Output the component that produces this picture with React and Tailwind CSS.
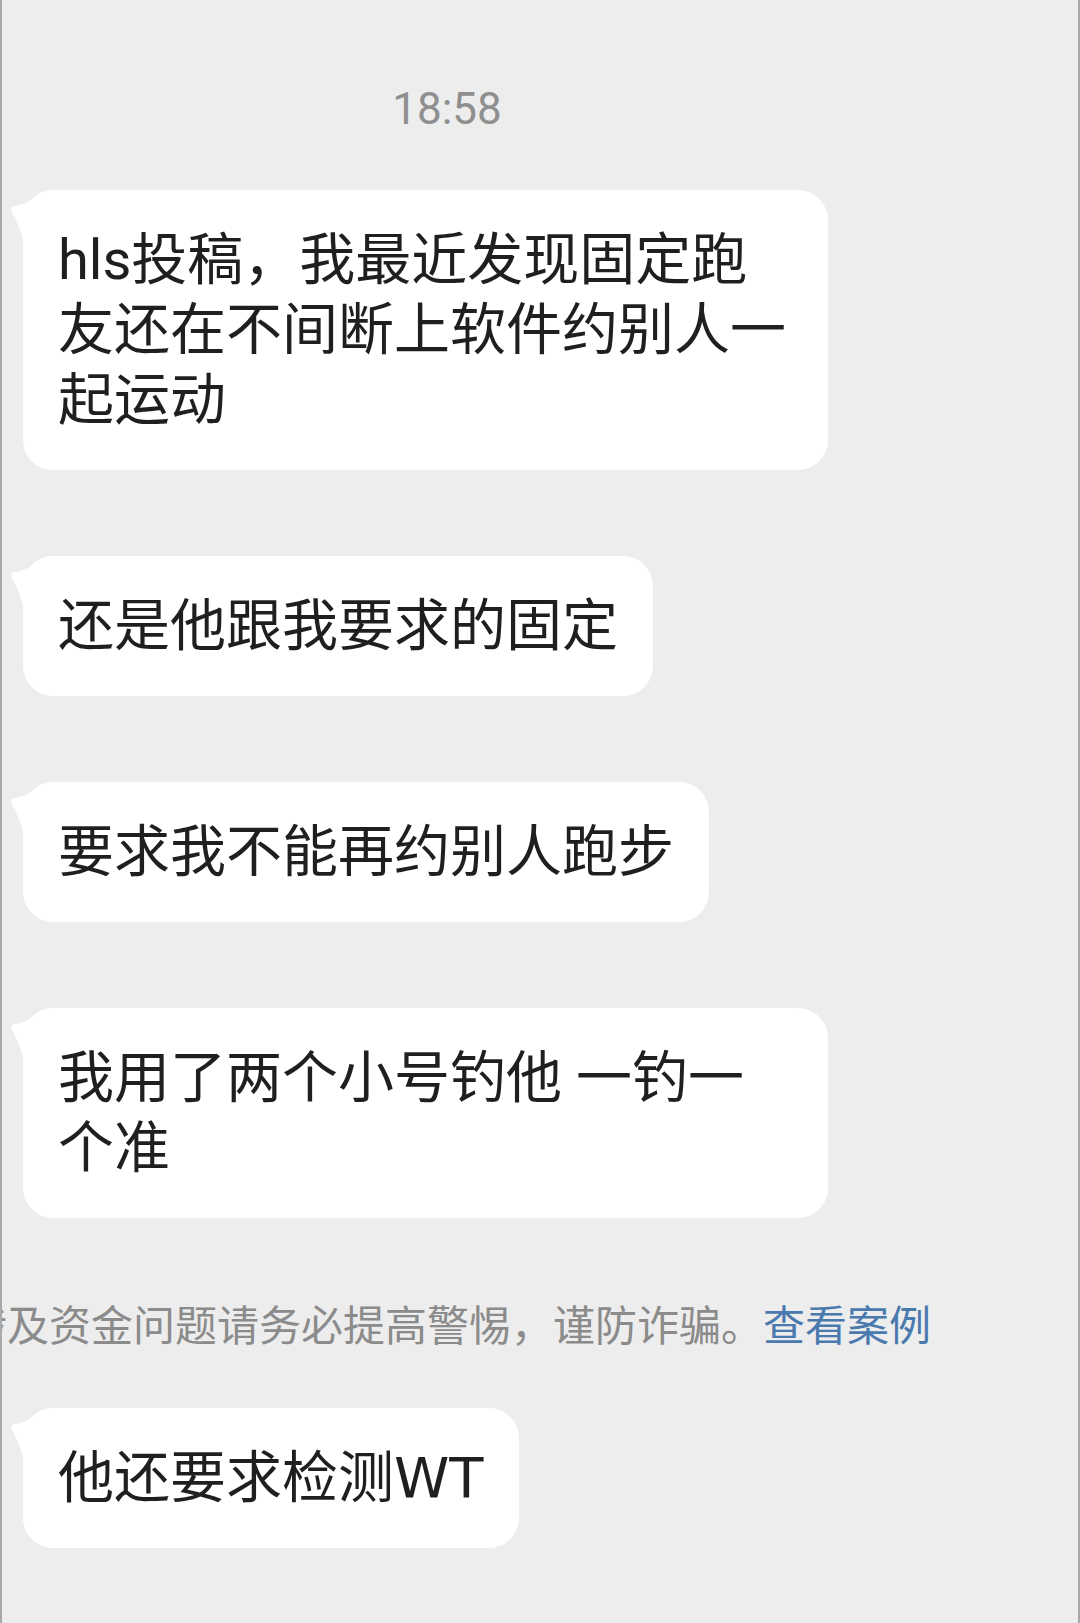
import React from 'react';

const cjk = { fontFamily: 'Roboto, "Noto Sans CJK SC", sans-serif' };

function Tail() {
  // little tail that sticks out on the left near the top of every bubble
  return (
    <svg className="absolute left-[-13px] top-0 w-[40px] h-[60px]" viewBox="0 0 40 60">
      <path d="M13 60 L13 48 Q8 33 2 22 Q-1 16 6 16 Q16 14 24 8 Q31 1 40 0 L40 60 Z" fill="#ffffff" />
    </svg>
  );
}

function Bubble({ children, className = '' }) {
  return (
    <div
      className={`relative w-fit max-w-[805px] ml-[21px] bg-white rounded-[30px] px-[35px] py-[35px] text-[56px] leading-[70px] text-[#1f1f1f] ${className}`}
      style={cjk}
    >
      <Tail />
      <span className="relative">{children}</span>
    </div>
  );
}

export default function App() {
  return (
    <div className="w-[1080px] min-h-[1623px] bg-[#ededed] border-x-2 border-[#a8a8a8] overflow-hidden flex flex-col pt-[79px]">
      <div className="flex justify-center pr-[186px]">
        <span className="text-[44px] leading-[60px] text-[#8f8f8f]" style={cjk}>18:58</span>
      </div>

      <Bubble className="mt-[51px]">hls投稿，我最近发现固定跑友还在不间断上软件约别人一起运动</Bubble>
      <Bubble className="mt-[86px]">还是他跟我要求的固定</Bubble>
      <Bubble className="mt-[86px]">要求我不能再约别人跑步</Bubble>
      <Bubble className="mt-[86px]">我用了两个小号钓他 一钓一个准</Bubble>

      <div className="flex justify-center pr-[184px] mt-[79px]">
        <p className="whitespace-nowrap text-[42px] leading-[60px] text-[#8b8b8b]" style={cjk}>
          涉及资金问题请务必提高警惕，谨防诈骗。<span className="text-[#4a79ae]">查看案例</span>
        </p>
      </div>

      <Bubble className="mt-[51px]">
        他还要求检测<span style={{ fontFamily: '"DejaVu Sans", sans-serif' }}>WT</span>
      </Bubble>
    </div>
  );
}
